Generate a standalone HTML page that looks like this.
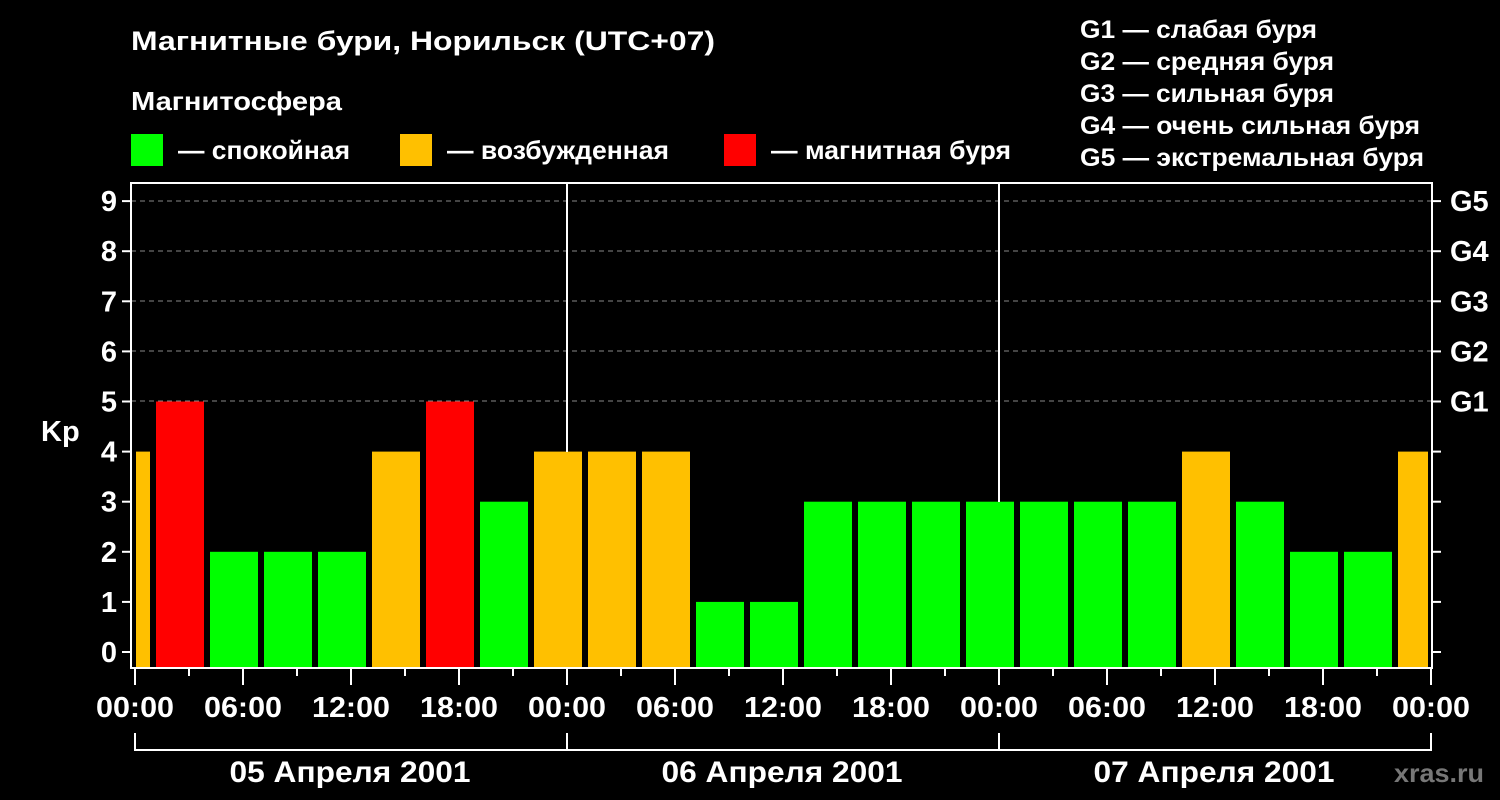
<!DOCTYPE html>
<html><head><meta charset="utf-8"><style>
body{margin:0;background:#000;}
svg{display:block}
text{font-family:"Liberation Sans",sans-serif;font-weight:bold;fill:#fff}
</style></head><body>
<svg width="1500" height="800" viewBox="0 0 1500 800" xmlns="http://www.w3.org/2000/svg">
<text x="131" y="50" font-size="27" textLength="584" lengthAdjust="spacingAndGlyphs">Магнитные бури, Норильск (UTC+07)</text>
<text x="131" y="110" font-size="26" textLength="211" lengthAdjust="spacingAndGlyphs">Магнитосфера</text>
<rect x="131" y="134" width="32" height="32" fill="#00ff00"/>
<text x="178" y="159" font-size="26" textLength="172" lengthAdjust="spacingAndGlyphs">— спокойная</text>
<rect x="400" y="134" width="32" height="32" fill="#ffc000"/>
<text x="447" y="159" font-size="26" textLength="222" lengthAdjust="spacingAndGlyphs">— возбужденная</text>
<rect x="724" y="134" width="32" height="32" fill="#ff0000"/>
<text x="771" y="159" font-size="26" textLength="240" lengthAdjust="spacingAndGlyphs">— магнитная буря</text>
<g font-size="25">
<text x="1080" y="38" textLength="237" lengthAdjust="spacingAndGlyphs">G1 — слабая буря</text>
<text x="1080" y="70" textLength="254" lengthAdjust="spacingAndGlyphs">G2 — средняя буря</text>
<text x="1080" y="102" textLength="254" lengthAdjust="spacingAndGlyphs">G3 — сильная буря</text>
<text x="1080" y="134" textLength="340" lengthAdjust="spacingAndGlyphs">G4 — очень сильная буря</text>
<text x="1080" y="166" textLength="344" lengthAdjust="spacingAndGlyphs">G5 — экстремальная буря</text>
</g>
<g stroke="#888" stroke-width="1" stroke-dasharray="5,4">
<line x1="131" y1="201" x2="1432" y2="201"/>
<line x1="131" y1="251" x2="1432" y2="251"/>
<line x1="131" y1="301" x2="1432" y2="301"/>
<line x1="131" y1="351" x2="1432" y2="351"/>
<line x1="131" y1="401" x2="1432" y2="401"/>
</g>
<g id="bars"></g>
<g stroke="#fff" stroke-width="2" fill="none">
<rect x="131" y="183" width="1301" height="485"/>
<line x1="567" y1="183" x2="567" y2="452"/>
<line x1="999" y1="183" x2="999" y2="502"/>
</g>
<g font-size="29" text-anchor="end" id="yl"></g>
<text x="41" y="441" font-size="29">Kp</text>
<g font-size="29" id="gl"></g>
<g id="xt"></g>
<g stroke="#fff" stroke-width="2" fill="none">
<path d="M135 733V750H1431V733M567 733V750M999 733V750"/>
</g>
<g font-size="30" text-anchor="middle">
<text x="350" y="782" textLength="241" lengthAdjust="spacingAndGlyphs">05 Апреля 2001</text>
<text x="782" y="782" textLength="241" lengthAdjust="spacingAndGlyphs">06 Апреля 2001</text>
<text x="1214" y="782" textLength="241" lengthAdjust="spacingAndGlyphs">07 Апреля 2001</text>
</g>
<text x="1394" y="782" font-size="26" textLength="90" lengthAdjust="spacingAndGlyphs" style="fill:#777">xras.ru</text>
</svg>
<script>
var ns="http://www.w3.org/2000/svg";
function el(p,t,a,txt){var e=document.createElementNS(ns,t);for(var k in a)e.setAttribute(k,a[k]);if(txt)e.textContent=txt;document.getElementById(p).appendChild(e);}
var vals=[5,2,2,2,4,5,3,4,4,4,1,1,3,3,3,3,3,3,3,4,3,2,2,4];
function col(q){return q>=5?"#ff0000":q==4?"#ffc000":"#00ff00";}
el("bars","rect",{x:136,y:652-50.1*4,width:14,height:667-(652-50.1*4),fill:col(4)});
for(var i=0;i<24;i++){var bx=156+54*i,bw=i==23?30:48,ty=652-50.1*vals[i];
el("bars","rect",{x:bx,y:ty,width:bw,height:667-ty,fill:col(vals[i])});}
for(var k=0;k<=9;k++){var yy=652-50.1*k;
el("yl","line",{x1:122,y1:yy,x2:131,y2:yy,stroke:"#fff","stroke-width":2});
el("yl","line",{x1:1432,y1:yy,x2:1441,y2:yy,stroke:"#fff","stroke-width":2});
el("yl","text",{x:117,y:yy+10},String(k));
if(k>=5)el("gl","text",{x:1450,y:yy+10},"G"+(k-4));}
var lab=["00:00","06:00","12:00","18:00"];
for(var j=0;j<=24;j++){var tx=135+54*j,big=j%2==0;
el("xt","line",{x1:tx,y1:669,x2:tx,y2:big?685:676,stroke:"#fff","stroke-width":2});
if(big){el("xt","text",{x:tx,y:717,"font-size":29,"text-anchor":"middle",textLength:78,lengthAdjust:"spacingAndGlyphs"},lab[(j/2)%4]);}}
</script>
</body></html>
